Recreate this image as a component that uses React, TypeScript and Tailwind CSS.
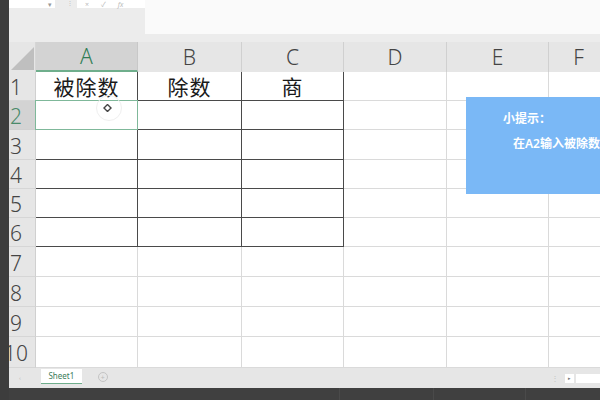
import React from "react";

const cols = [
  { key: "A", w: 102 },
  { key: "B", w: 104 },
  { key: "C", w: 102 },
  { key: "D", w: 103 },
  { key: "E", w: 102 },
  { key: "F", w: 60 },
];

const rowHeights = [29, 29, 30, 29, 29, 29, 30, 30, 30, 31];

const header: Record<string, string> = { A: "被除数", B: "除数", C: "商" };

const font = { fontFamily: '"Noto Sans", "Noto Sans CJK SC", sans-serif' };

const Cell = ({ row, col, w }: { row: number; col: number; w: number }) => {
  const inTable = row <= 6 && col <= 2;
  const selected = row === 2 && col === 0;
  const text = row === 1 ? header[cols[col].key] : undefined;
  return (
    <div
      style={{ width: w }}
      className={`relative shrink-0 flex items-center justify-center border-r border-b ${
        inTable ? "border-r-[#4a4a4a] border-b-[#4a4a4a]" : "border-r-[#dadada] border-b-[#dadada]"
      }`}
    >
      {text && (
        <span className="text-[21px] leading-none text-[#1a1a1a] tracking-[1px] pt-[2px]">{text}</span>
      )}
      {selected && (
        <div className="absolute -left-px -top-px -right-px -bottom-px border-[1.5px] border-[#7fb89a]">
          <div className="absolute left-[60px] top-[-6px] w-[26px] h-[26px] rounded-full border border-[#efefef]" />
          <svg className="absolute left-[67px] top-[3px]" width="9" height="8" viewBox="0 0 9 8">
            <path d="M4.5 0.5 L8 4 L4.5 7.5 L1 4 Z" fill="none" stroke="#444" strokeWidth="1.4" />
          </svg>
        </div>
      )}
    </div>
  );
};

export default function App() {
  return (
    <div className="relative w-[600px] h-[400px] overflow-hidden bg-[#404040] flex" style={font}>
      <div className="w-[9px] shrink-0 bg-[#3d3d3d]" />
      <div className="flex-1 flex flex-col overflow-hidden">
        {/* formula bar */}
        <div className="h-[34px] flex shrink-0">
          <div className="w-[136px] bg-[#ececec] relative">
            <div className="absolute left-0 top-0 w-[46px] h-[8px] bg-white flex items-end justify-end pr-[3px]">
              <span className="text-[7px] leading-none text-[#999]">▾</span>
            </div>
            <span className="absolute left-[58px] top-0 text-[6px] leading-none text-[#bbb]">⋮</span>
            <div className="absolute left-[68px] top-0 w-[68px] h-[8px] bg-white flex items-center gap-[12px] pl-[8px] text-[7px] leading-none text-[#bbb]">
              <span>×</span>
              <span>✓</span>
              <span className="italic">fx</span>
            </div>
          </div>
          <div className="flex-1 bg-[#fafafa]" />
        </div>
        <div className="h-[8px] bg-[#ececec] shrink-0" />

        {/* column headers */}
        <div className="h-[30px] flex shrink-0 bg-[#e6e6e6]">
          <div className="w-[27px] shrink-0 relative border-r border-[#d6d6d6]">
            <svg className="absolute left-[2px] top-[5px]" width="24" height="24" viewBox="0 0 24 24">
              <polygon points="23,0 23,23 0,23" fill="#bfbfbf" />
            </svg>
          </div>
          {cols.map((c, i) => (
            <div
              key={c.key}
              style={{ width: c.w }}
              className={`shrink-0 flex items-center justify-center text-[21px] leading-none font-light border-r ${
                i === 0
                  ? "bg-[#d3d3d3] text-[#2f7d55] border-b-[2px] border-b-[#6fae8c] border-r-[#c8c8c8]"
                  : "text-[#444] border-r-[#d0d0d0]"
              }`}
            >
              {c.key}
            </div>
          ))}
        </div>

        {/* rows */}
        {rowHeights.map((h, ri) => {
          const row = ri + 1;
          return (
            <div key={row} style={{ height: h }} className="flex shrink-0 bg-white">
              <div
                className={`relative w-[27px] shrink-0 overflow-hidden border-r border-b ${
                  row === 2
                    ? "bg-[#d3d3d3] text-[#4a8a6a] border-r-[#6fae8c] border-b-[#d0d0d0]"
                    : "bg-[#e6e6e6] text-[#444] border-r-[#d0d0d0] border-b-[#d6d6d6]"
                }`}
              >
                <span className="absolute left-[7px] top-1/2 -translate-x-1/2 -translate-y-1/2 text-[21px] leading-none pt-[2px] font-light">
                  {row}
                </span>
              </div>
              {cols.map((c, ci) => (
                <Cell key={c.key} row={row} col={ci} w={c.w} />
              ))}
            </div>
          );
        })}

        {/* sheet tabs */}
        <div className="h-[20px] shrink-0 bg-[#e6e6e6] flex items-center relative">
          <span className="ml-[10px] text-[6px] text-[#bbb]">‹</span>
          <div className="ml-[20px] w-[41px] h-[15px] -mt-[4px] bg-white border-b-[1.5px] border-[#6fae8c] flex items-center justify-center">
            <span className="text-[8px] leading-none text-[#3b7d5a]">Sheet1</span>
          </div>
          <div className="ml-[16px] -mt-[2px] w-[10px] h-[10px] rounded-full border border-[#c4c4c4] flex items-center justify-center">
            <span className="text-[7px] leading-none text-[#bbb]">+</span>
          </div>
          <div className="flex-1" />
          <span className="text-[8px] text-[#c4c4c4] mr-[6px]">⋮</span>
          <div className="w-[9px] h-[9px] bg-white flex items-center justify-center mr-[2px]">
            <span className="text-[5px] leading-none text-[#777]">▸</span>
          </div>
          <div className="w-[24px] h-[9px] bg-white" />
        </div>

        {/* bottom dark strip */}
        <div className="flex-1 bg-[#404040] flex">
          <div className="w-[331px] border-r border-[#4a4a4a]" />
          <div className="w-[94px] border-r border-[#4a4a4a]" />
          <div className="w-[92px] border-r border-[#4a4a4a]" />
        </div>
      </div>

      {/* tip box */}
      <div className="absolute left-[466px] top-[97px] w-[150px] h-[97px] bg-[#7ab8f6] text-white">
        <div className="absolute left-[37px] top-[16px] text-[12px] leading-none font-semibold whitespace-nowrap">小提示：</div>
        <div className="absolute left-[47px] top-[41px] text-[12px] leading-none font-semibold whitespace-nowrap">在A2输入被除数</div>
      </div>
    </div>
  );
}
